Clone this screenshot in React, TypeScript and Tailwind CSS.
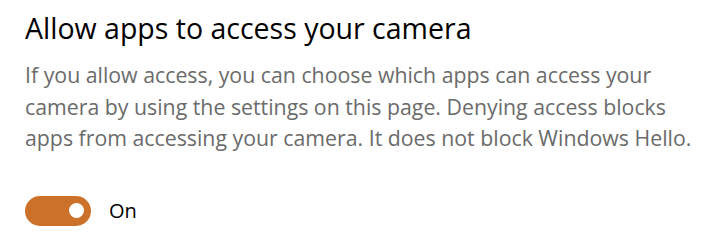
export default function App() {
  return (
    <div className="w-[716px] h-[240px] bg-white pl-[25px] pt-[8px] font-['Open_Sans','Noto_Sans',sans-serif]">
      <h1 className="text-[28.5px] leading-[40px] text-black">
        Allow apps to access your camera
      </h1>
      <p className="mt-[11px] text-[21.3px] leading-[31.5px] text-[#6b6b6b]">
        If you allow access, you can choose which apps can access your
        <br />
        camera by using the settings on this page. Denying access blocks
        <br />
        apps from accessing your camera. It does not block Windows Hello.
      </p>
      <div className="mt-[42px] flex items-center gap-[18px]">
        <div className="flex h-[30px] w-[66px] items-center justify-end rounded-full bg-[#cc712a] pr-[7px]">
          <div className="h-[15px] w-[15px] rounded-full bg-white" />
        </div>
        <span className="text-[20px] text-black">On</span>
      </div>
    </div>
  );
}
